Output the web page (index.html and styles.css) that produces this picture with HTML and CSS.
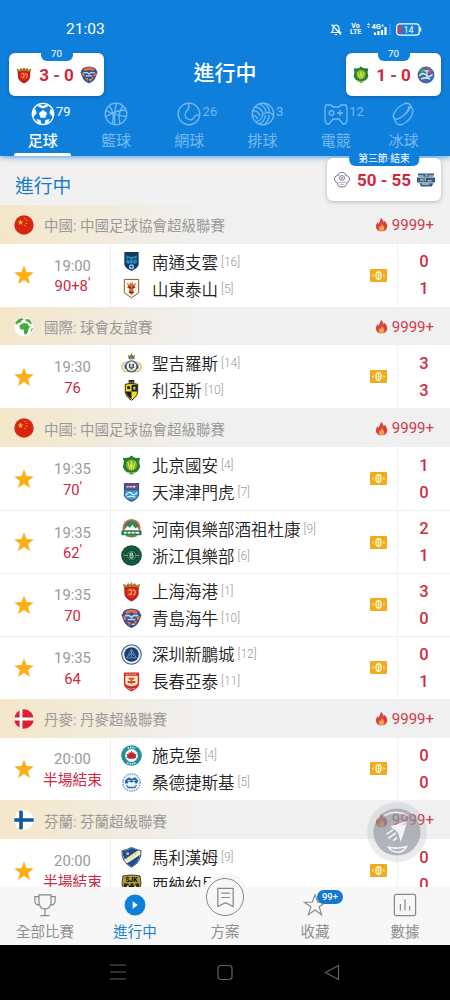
FILE: index.html
```
<!DOCTYPE html>
<html lang="zh-Hant">
<head>
    <meta charset="UTF-8">
    <meta name="viewport" content="width=device-width, initial-scale=1">
    <title>進行中</title>
    <link rel="stylesheet" href="styles.css">
</head>
<body>
    <!-- shared icons and club badges -->
    <svg class="sprite" aria-hidden="true">
        <symbol id="star" viewBox="0 0 24 24"><path fill="#fcb017" d="M12 1.5l2.8 7.3 7.9.4-6.2 4.9 2.1 7.6-6.6-4.3-6.6 4.3 2.1-7.6-6.2-4.9 7.9-.4z"/></symbol>
        <symbol id="flame" viewBox="0 0 14 16">
            <path fill="#d9423a" d="M6.2.8c2.4 1.6 3 3.6 3 5.1.6-.5.9-1.1 1-1.9C12 5.600 13.200 7.700 13.200 10c0 3.300-2.500 5.400-6 5.400S1 13.300 1 10.100c0-2 1-3.600 2-4.800.1 1 .4 1.700 1 2.200C4.200 5 6.600 3.500 6.200.8z"/>
            <path fill="#f5a14d" d="M7.300 7c.2 1.700 2.700 2.900 2.700 5.200 0 1.800-1.200 2.800-2.900 2.800s-3-1-3-2.800c0-1.100.5-1.900 1.100-2.500.2.700.5 1 .9 1.200.5-1.200.9-2.200 1.200-3.900z"/>
        </symbol>
        <symbol id="ticket" viewBox="0 0 17 13">
            <rect width="17" height="13" rx="1" fill="#f0ac1e"/>
            <ellipse cx="8.500" cy="6.500" rx="2.500" ry="3.700" fill="none" stroke="#fff3c8" stroke-width="1.500"/>
            <path d="M8.500 1.800v9.400M7.300 6.500h2.400" stroke="#fff3c8"/>
            <path d="M3.600 5L2 6.500 3.600 8zM13.400 5L15 6.500 13.400 8z" fill="#fff3c8"/>
        </symbol>
        <symbol id="cn" viewBox="0 0 20 20">
            <circle cx="10" cy="10" r="9.700" fill="#d9240f"/>
            <path fill="#fcc42c" d="M6.500 4.500l.8 2h2.100L7.700 7.800l.6 2.100-1.800-1.200-1.800 1.200.6-2.100-1.700-1.300h2.100z"/>
            <path fill="#fcc42c" d="M10.500 3h1v1h-1zM12.200 5h1v1h-1zM12 8h1v1h-1zM10.300 10h1v1h-1z"/>
        </symbol>
        <symbol id="world" viewBox="0 0 20 20">
            <circle cx="10" cy="10" r="9.500" fill="#fbfdfa"/>
            <path fill="#46a83f" d="M1.200 6.500C2.600 3.500 5 1.600 8 1l1.600 1.700-2.200.8-1 2.300-2.600.4-1 1.300zM6.500 7.500l3-1.600 4 .5 1.200 2.700 1.600.3-1.900 2.600-.5 3.200-2.200 2.500-1.600-.9-.3-4-3.300-.6-1.200-2.500zM11.500 2l4 .5 2.600 4-1.700.5-2.400-2.300-2.300-.4zM17.500 11.500l1.500-1-1.300 3.800-1 .3z"/>
        </symbol>
        <symbol id="dk" viewBox="0 0 20 20">
            <circle cx="10" cy="10" r="9.700" fill="#dc1f35"/>
            <path d="M7 .6v18.800M.3 10h19.400" stroke="#fff" stroke-width="2.800"/>
        </symbol>
        <symbol id="fi" viewBox="0 0 20 20">
            <circle cx="10" cy="10" r="9.700" fill="#fdfdfd"/>
            <path d="M7 .8v18.400M.3 10h19.400" stroke="#15569c" stroke-width="3.600"/>
        </symbol>

        <symbol id="nantong" viewBox="0 0 22 22">
            <path fill="#12395f" d="M3.500 1h15v12.500c0 3.200-3.500 5.200-7.500 7.500-4-2.300-7.500-4.300-7.500-7.500z"/>
            <path fill="#2583ba" d="M5 4.500l4 1.500h4l4-1.500-1 4.500 1 3-3 2-1.500-2-1.500 2-1.500-2L8 14l-3-2 1-3z"/>
            <path d="M7 8l3 1.500M15 8l-3 1.500" stroke="#0c2745" stroke-width="1.300"/>
            <circle cx="11" cy="16.500" r="2.700" fill="#8ed0ef"/><circle cx="11" cy="16.500" r="1.200" fill="#174a77"/>
        </symbol>
        <symbol id="shandong" viewBox="0 0 22 22">
            <path fill="#fff8ee" stroke="#74572f" d="M3.500 1.500h15v14L11 20.800 3.500 15.500z"/>
            <path fill="#e0683a" d="M6 5l3 2 1-3 1 2 1-2 1 3 3-2-1.500 4 1 1-3 1 1 4-2.500 3L8 15l1-4-3-1 1.500-1z"/>
            <path d="M8 9l2 2M14 9l-2 2M9 15h4" stroke="#37251c" stroke-width="1.400"/>
        </symbol>
        <symbol id="union" viewBox="0 0 22 22">
            <path fill="#777b48" d="M7.500 2L9.500 3 11 0l1.500 3 2-1L14 6.500H8z"/>
            <circle cx="6" cy="14.500" r="5" fill="#fffbea" stroke="#d6c14c" stroke-width="1.300"/>
            <circle cx="16" cy="14.500" r="5" fill="#fffbea" stroke="#d6c14c" stroke-width="1.300"/>
            <circle cx="11" cy="14" r="5.800" fill="none" stroke="#3d5ba6" stroke-width="1.400"/>
            <path d="M9 11.500V15q2 1.800 4 0v-3.500M4.500 12v4.500M17.500 12v4.500" fill="none" stroke="#28478f" stroke-width="1.500"/>
        </symbol>
        <symbol id="lierse" viewBox="0 0 22 22">
            <path fill="#222" d="M8 0h6v4H8z"/><path fill="#e4c628" d="M9 1.500h1v2H9zM12 1.500h1v2h-1z"/>
            <path fill="#f2dc25" stroke="#222" d="M4.500 4.500q6.500-2 13 0v8q-1 5.500-6.500 8.700-5.500-3.200-6.500-8.700z"/>
            <path fill="#1c1c1c" d="M5 12h6v8q-5-3-6-8zM11 5h6v7h-6z"/>
            <path fill="#1c1c1c" d="M6.500 6.500h3v3h-3z"/><path fill="#f2dc25" d="M13 7h2v3h-2z"/>
        </symbol>
        <symbol id="beijing" viewBox="0 0 22 22">
            <path fill="#267b34" d="M11 .5l3 2.300 6 .4-1 4 1 6-3 4-6 3.500L5 17.200l-3-4 1-6-1-4 6-.4z"/>
            <circle cx="11" cy="10.500" r="5.800" fill="#7cb52f"/>
            <path d="M7 7l2.200 7L11 8l1.800 6L15 7M11 6v10" fill="none" stroke="#e0e345" stroke-width="1.100"/>
            <path d="M6 18q5 2 10 0" fill="none" stroke="#b4d24a"/>
        </symbol>
        <symbol id="tianjin" viewBox="0 0 22 22">
            <path fill="#3c568e" d="M3 1h16v13q-1 4-8 7-7-3-8-7z"/>
            <path fill="#8c4c70" d="M5 3h12v4H5z"/><path d="M6 5h2m1 0h2m1 0h3" stroke="#dfe4ef" stroke-width="1.500"/>
            <path fill="#3b9cd1" d="M4 9h14v5q-1 3-7 5.500-6-2.500-7-5.500z"/>
            <path d="M5 14q3-5 6-2 2 3 6-1M6 16q5-2 9 0" fill="none" stroke="#dff2fb" stroke-width="1.300"/>
        </symbol>
        <symbol id="tigers" viewBox="0 0 22 22">
            <circle cx="11" cy="11" r="10.300" fill="#46689f"/>
            <path fill="#4d9c6b" d="M3 6l4-4 3 3-3 4z"/><path fill="#c8518b" d="M13 2l5 3-2 4-4-2z"/>
            <path d="M3 12q4-5 8-1t8-1M5 16q6-3 11 0" fill="none" stroke="#cfe8f7" stroke-width="2"/>
            <path d="M9 6h5M12 6v7" stroke="#e9eef7" stroke-width="1.500"/>
        </symbol>
        <symbol id="henan" viewBox="0 0 22 22">
            <circle cx="11" cy="10.500" r="9.500" fill="#d3645a"/><path fill="#2b8b4b" d="M4 8a7.300 7.300 0 0 1 14 0v5H4z"/>
            <path fill="#fff" d="M3 13l4-5 2 2.500L12 7l3 4 2-1.500 2 3.500z"/>
            <path fill="#1f7d45" d="M.5 13h21v5H.5z"/><path d="M3 15.500h3m1 0h3m1 0h3m1 0h4" stroke="#e6f6e8" stroke-width="2"/>
            <path d="M5 18.500q6 3 12 0" fill="none" stroke="#2b8b4b"/>
        </symbol>
        <symbol id="zhejiang" viewBox="0 0 22 22">
            <circle cx="11" cy="11" r="10.800" fill="#0e4f35"/><circle cx="11" cy="11" r="8.200" fill="none" stroke="#286a50"/>
            <circle cx="11" cy="11" r="4.500" fill="none" stroke="#5c9a7c" stroke-width=".8"/>
            <path d="M3 11h4m8 0h4" stroke="#b59b52"/><path d="M9.500 8.500v5m0-5h2.500v2H9.500m3 0v3h-3" fill="none" stroke="#cbeeda"/>
        </symbol>
        <symbol id="shanghai" viewBox="0 0 22 22">
            <path fill="#ae7c27" d="M2 3l3.500 1.500L7.500 2 9.500 4 11 .8 12.500 4l2-2 2 2.500L20 3l-1.500 6h-15z"/>
            <path fill="#b92020" d="M3.500 7q7.500-2 15 0v6.500q-1 5-7.500 8-6.500-3-7.500-8z"/>
            <circle cx="11" cy="12" r="5.500" fill="#e22b1d"/>
            <path d="M8 10q2-2 3 .2v3q-1.500 2-3 0M12 10q3-1.500 3 1.500t-2 3" fill="none" stroke="#f6b35e" stroke-width="1.200"/>
        </symbol>
        <symbol id="qingdao" viewBox="0 0 22 22">
            <path fill="#34508c" d="M2 5q1-4 9-4.500Q19 1 20 5l1.500 3-2.500 6q-2 5-8 7-6-2-8-7L.5 8z"/>
            <path fill="#ef6b42" d="M4 4q7-5 14 0l-2 2.500-5-2-5 2z"/>
            <path fill="#ef6b42" d="M1 8l5 2-1 3-2-1zM21 8l-5 2 1 3 2-1zM6 14l4 1-1 4zM14 13l3 1-3 4z"/>
            <path d="M4 8h5l2 2 2-2h5M7 12h8M11 17h3" stroke="#b6daf0" stroke-width="1.600" fill="none"/>
        </symbol>
        <symbol id="shenzhen" viewBox="0 0 22 22">
            <circle cx="11" cy="11" r="10.200" fill="#e8f0f6" stroke="#315b87" stroke-width="1.100"/><circle cx="11" cy="11" r="7.600" fill="#1c3e6e"/>
            <path d="M11 5.500l-5 9h10zM8 13l3-4 3 4M11 6v8" fill="none" stroke="#5d94c4"/>
        </symbol>
        <symbol id="changchun" viewBox="0 0 22 22">
            <path fill="#d32a2b" d="M3 1.500h16V14q-1 4.500-8 7.500-7-3-8-7.500z"/>
            <path fill="#f7e9bd" d="M4.500 5h13v8.500q-2 2-6.500 2.500-4.500-.5-6.500-2.500z"/>
            <path fill="#d34932" d="M8 7h6v2H8zM7 10.500h8v2H7zM10.200 7h1.600v7h-1.600z"/>
            <path d="M5 3.300h12M7 18q4 2 8 0" fill="none" stroke="#f4ccb9" stroke-dasharray="2 1"/>
        </symbol>
        <symbol id="silkeborg" viewBox="0 0 22 22">
            <circle cx="11" cy="11" r="10.800" fill="#218f99"/><circle cx="11" cy="11" r="6.700" fill="#eefafa"/>
            <path d="M7 3.500q4-2 8 0M6.500 18.500q4.500 2.500 9 0" fill="none" stroke="#c5ecea" stroke-width="1.800" stroke-dasharray="1.500 1"/>
            <path fill="#c02830" d="M11 6l1.300 2.500 1.700-1v2.300l2.300-.3-1 2.500 1 1-3 1.500h-4.600L5.700 13l1-1-1-2.500 2.300.3V7.500l1.700 1z"/>
        </symbol>
        <symbol id="sonderjyske" viewBox="0 0 22 22">
            <circle cx="11" cy="11" r="10" fill="#f0f6fb"/><circle cx="11" cy="11" r="9" fill="none" stroke="#7b9fca" stroke-width="1.600" stroke-dasharray="1.500 1"/>
            <path fill="#3167a4" d="M4.500 8l4-2.500L11 7l4-1.500L18 9l-1 3h-2l-1-2-3 1-3-1-1 2H4zM5 13q6 4 12 0l-2 4H7z"/>
            <path d="M7 9h3m2 0h3M7 15h8" stroke="#d7eaf6"/>
        </symbol>
        <symbol id="mariehamn" viewBox="0 0 22 22">
            <path fill="#f8f6dc" stroke="#224b8c" d="M1 4q5-1 10-3.500Q16 3 21 4q.5 12-10 17.200Q.5 16 1 4z"/>
            <path fill="#204c91" d="M1.500 4.300Q7 3.500 11 1l7 2.500L3.800 13Q1.500 9 1.500 4.300zM6 17.200L20 8q-1 8-9 12.800z"/>
            <path d="M6 14l12-8" stroke="#e6d15b" stroke-width="2.500" stroke-dasharray="2 1.300"/><circle cx="7" cy="7" r="1.500" fill="#d7c94f"/>
        </symbol>
        <symbol id="sjk" viewBox="0 0 22 22">
            <path fill="#ad9d42" stroke="#46401e" d="M2 2q9-2 18 0l1 8-2 8-8 4-8-4-2-8z"/>
            <path fill="#252416" d="M3 10h5v2h2v-2h3v2h2v-2h4v3l-3 2 1 3-3-1-3 3-3-3-3 1 1-3-3-2z"/>
            <text x="11" y="8.800" class="crest-text">SJK</text>
            <path fill="#e8d76c" d="M6 12h2v2H6zM14 12h2v2h-2zM10 15h2v2h-2z"/>
        </symbol>
        <symbol id="taipei" viewBox="0 0 22 22">
            <path d="M11 2q4-1 4.500 3.500Q21 6 20 11q-1 3-3 3-.5 6-6 5.500-5.500.5-6-5.500-2 0-3-3Q1 6 6.500 5.500 7 1 11 2z" fill="#fff" stroke="#756b9c" stroke-width="1.200"/>
            <circle cx="11" cy="8.500" r="3" fill="none" stroke="#6a5788"/><circle cx="11" cy="8.500" r="1" fill="#3e3e73"/>
            <path d="M6 14h10M8 16.500h6" stroke="#cb9da9"/>
        </symbol>
        <symbol id="kings" viewBox="0 0 22 22">
            <path fill="#315a7b" d="M1 3h20l-1 4H2zM0 8h22v6H0zM3 15h17l-2 4H5z"/>
            <path d="M2 6h6m2-1h3m2 1h5M4 10h4m2 2V9m3 3h5M6 16h9" stroke="#d9edf5" stroke-width="1.200"/>
            <path fill="#72a9bf" d="M2 12l5-2 2 3zM14 4l5 2-4 2z"/>
        </symbol>
    </svg>

    <div class="phone">
        <header class="header">
            <div class="status">
                <span class="clock">21:03</span>
                <div class="status-icons">
                    <svg width="12" height="13" viewBox="0 0 12 13" fill="none" stroke="#fff" stroke-width="1.200"><path d="M1.500 9.500h9L9 7.500V5Q8.500 2 6 2 3.500 2 3 5v2.500zM5 11.500h2M1.500 1.500l9.500 10"/></svg>
                    <span class="volte">Vo<br>LTE</span>
                    <svg class="signal" width="25" height="14" viewBox="0 0 25 14">
                        <path d="M1 3l1.500-2L4 3zM1 4.500L2.500 6 4 4.500z" fill="#fff"/>
                        <text x="5.500" y="6.500" class="net">4G⁺</text>
                        <path d="M9 13v-2.500M12.500 13V9M16 13V8M19.500 13V5" stroke="#fff" stroke-width="2.200"/>
                        <path d="M24 2v11" stroke="#5ba9eb"/>
                    </svg>
                    <svg class="battery" width="26" height="13" viewBox="0 0 26 13">
                        <rect x=".7" y=".8" width="22.500" height="11.400" rx="3" fill="none" stroke="#fff" stroke-width="1.200"/>
                        <path d="M2.500 2.500h3v8h-3z" fill="#e5374d"/><path d="M24.500 4.500v4" stroke="#fff" stroke-width="1.500"/>
                        <text x="12.500" y="9.700" class="level">14</text>
                    </svg>
                </div>
            </div>
            <h1 class="title">進行中</h1>
            <nav class="sports">
                <a class="sport active">
                    <svg viewBox="0 0 24 24"><circle cx="12" cy="12" r="10.700"/><path class="solid" d="M12 8l4 3-1.500 4.700h-5L8 11zM8 2.200L12 4l4-1.800 1 2.300L12 6.500 7 4.500zM1.500 9L4.800 7l.7 4.500-3.300 3.500zM22.500 9l-3.300-2-.7 4.500 3.300 3.500zM5.500 17l4 1 .8 4-3.500-1.500zM18.500 17l-4 1-.8 4 3.500-1.500z"/></svg>
                    <sup>79</sup><span>足球</span>
                </a>
                <a class="sport">
                    <svg viewBox="0 0 24 24"><circle cx="12" cy="12" r="10.800"/><path d="M2 8.500q9 5 20.500 6M12.500 1.200q-3 10-1.500 21.600M5 4q6 6 3.500 18M19 4q-6 7-3 18M22 8q-10 0-20.500 7"/></svg>
                    <span>籃球</span>
                </a>
                <a class="sport">
                    <svg viewBox="0 0 24 24"><circle cx="12" cy="12" r="10.800"/><path d="M11 1.500q2.500 3.500-1 7-4 4.500 0 8 5 3 7-1 1.500-3 5.500-2.500"/></svg>
                    <sup>26</sup><span>網球</span>
                </a>
                <a class="sport">
                    <svg viewBox="0 0 24 24"><circle cx="12" cy="12" r="10.800"/><path d="M12 12q-1-6-8-7M12 12q6-3 10.500 1M12 12q-1 6-7 8M8 2q6 2 7 8M13 1.500q5 3 5.500 9M2 9q5-1 7 5M1.500 14q4-1 5 3M14.500 13q-.5 6-6 9M18 13q0 5-4 9"/></svg>
                    <sup>3</sup><span>排球</span>
                </a>
                <a class="sport esport">
                    <svg viewBox="0 0 24 24"><path d="M2 3h5l2 2h6l2-2h5l1 3v13l-2 3h-2l-4-5H9l-4 5H3l-2-3V6z"/><circle cx="7.500" cy="11" r="2.300"/><path d="M13 11h6M16 8v6"/></svg>
                    <sup>12</sup><span>電競</span>
                </a>
                <a class="sport">
                    <svg viewBox="0 0 24 24"><path d="M2 14Q5 5 14 1.500q4-1 6 2.500l2 4.500Q21 18 11 22.500q-4 1-6-2zM2 14q1 4 5 3 9-4 13-13M7 17q10-5 11-13"/></svg>
                    <span>冰球</span>
                </a>
            </nav>
            <div class="float-score left">
                <em>70</em><svg><use href="#shanghai"/></svg><b>3 - 0</b><svg><use href="#qingdao"/></svg>
            </div>
            <div class="float-score right">
                <em>70</em><svg><use href="#beijing"/></svg><b>1 - 0</b><svg><use href="#tigers"/></svg>
            </div>
            <div class="float-score basket">
                <em>第三節·結束</em><svg><use href="#taipei"/></svg><b>50 - 55</b><svg><use href="#kings"/></svg>
            </div>
        </header>

        <main class="content">
            <h2 class="section-title">進行中</h2>
            <div id="list"></div>
        </main>

        <nav class="tabbar">
            <a class="tab">
                <svg viewBox="0 0 26 26"><path d="M6.500 2h13v8q-.5 7-6.500 7.500Q7 17 6.500 10zM6.500 4H2v5q.5 4 6 4M19.500 4H24v5q-.5 4-6 4M13 17.500V24M8 24.500h10"/></svg>
                <span>全部比賽</span>
            </a>
            <a class="tab active">
                <svg viewBox="0 0 26 26"><circle cx="13" cy="13" r="11.300" class="disc"/><path class="play" d="M10.500 9l5.500 4-5.500 4z"/></svg>
                <span>進行中</span>
            </a>
            <a class="tab plan">
                <i class="plan-icon"><svg viewBox="0 0 24 24"><path d="M4 2.500h16v19l-8-4-8 4zM7.500 7.500h9M7.500 12h9"/></svg></i>
                <span>方案</span>
            </a>
            <a class="tab">
                <svg viewBox="0 0 26 26"><path d="M13 2l3 8h8.500l-7 5 2.700 8.500L13 18.500l-7.200 5L8.500 15l-7-5H10z"/></svg>
                <em class="badge">99+</em>
                <span>收藏</span>
            </a>
            <a class="tab">
                <svg viewBox="0 0 26 26"><rect x="1.500" y="1.500" width="23" height="23" rx="2"/><path d="M8 12v7M13 7v12M18 14v5"/></svg>
                <span>數據</span>
            </a>
        </nav>

        <div class="float-ball">
            <svg viewBox="0 0 50 50">
                <circle cx="25" cy="25" r="24.500" fill="#8d919b"/>
                <path d="M12 8q12-7 24 0M16 41q9 2 19-1-3 6-9 6t-10-5z" fill="none" stroke="#fff" stroke-width="1.600"/>
                <path d="M18 19l18-5.500-7 22-3-10z" fill="#fff"/>
                <path d="M14 27.500l7-5M16 31.500l8-5.500M21 34l4-3" stroke="#fff" stroke-width="1.800"/>
            </svg>
        </div>

        <footer class="system">
            <svg viewBox="0 0 20 20"><path d="M2 3h16M2 10h16M2 17h16"/></svg>
            <svg viewBox="0 0 20 20"><rect x="3" y="3.500" width="14" height="14" rx="3"/></svg>
            <svg viewBox="0 0 20 20"><path d="M16.500 3.500v14L3.500 10.500z"/></svg>
        </footer>
    </div>

    <script>
        var CSL = '中國: 中國足球協會超級聯賽';
        // match: [start, minute, home, home rank, home badge, away, away rank, away badge, home goals, away goals]
        var leagues = [
            { flag: 'cn', name: CSL, matches: [
                ['19:00', "90+8'", '南通支雲', 16, 'nantong', '山東泰山', 5, 'shandong', 0, 1]
            ]},
            { flag: 'world', name: '國際: 球會友誼賽', matches: [
                ['19:30', '76', '聖吉羅斯', 14, 'union', '利亞斯', 10, 'lierse', 3, 3]
            ]},
            { flag: 'cn', name: CSL, matches: [
                ['19:35', "70'", '北京國安', 4, 'beijing', '天津津門虎', 7, 'tianjin', 1, 0],
                ['19:35', "62'", '河南俱樂部酒祖杜康', 9, 'henan', '浙江俱樂部', 6, 'zhejiang', 2, 1],
                ['19:35', '70', '上海海港', 1, 'shanghai', '青島海牛', 10, 'qingdao', 3, 0],
                ['19:35', '64', '深圳新鵬城', 12, 'shenzhen', '長春亞泰', 11, 'changchun', 0, 1]
            ]},
            { flag: 'dk', name: '丹麥: 丹麥超級聯賽', matches: [
                ['20:00', '半場結束', '施克堡', 4, 'silkeborg', '桑德捷斯基', 5, 'sonderjyske', 0, 0]
            ]},
            { flag: 'fi', name: '芬蘭: 芬蘭超級聯賽', matches: [
                ['20:00', '半場結束', '馬利漢姆', 9, 'mariehamn', '西納約尼', '', 'sjk', 0, 0]
            ]}
        ];

        function icon(id, cls) {
            return '<svg class="' + cls + '"><use href="#' + id + '"/></svg>';
        }

        function team(name, rank, badge) {
            return '<div class="team">' + icon(badge, 'crest') + '<span>' + name + '</span>' +
                (rank ? '<small>[' + rank + ']</small>' : '') + '</div>';
        }

        var html = '';
        leagues.forEach(function(league) {
            html += '<div class="league">' + icon(league.flag, 'flag') + '<span>' + league.name + '</span>' +
                icon('flame', 'flame') + '<b>9999+</b></div>';
            league.matches.forEach(function(m) {
                var minute = m[1].replace("'", "<sup>'</sup>");
                html += '<div class="match">' + icon('star', 'star') +
                    '<div class="time"><span>' + m[0] + '</span><span class="minute">' + minute + '</span></div>' +
                    '<div class="teams">' + team(m[2], m[3], m[4]) + team(m[5], m[6], m[7]) + '</div>' +
                    icon('ticket', 'ticket') +
                    '<div class="score"><b>' + m[8] + '</b><b>' + m[9] + '</b></div></div>';
            });
        });
        document.getElementById('list').innerHTML = html;
    </script>
</body>
</html>
```
FILE: styles.css
```
* {
    box-sizing: border-box;
}

body {
    margin: 0;
    font-family: Roboto, "Noto Sans CJK TC", sans-serif;
    color: #222;
}

h1, h2 {
    margin: 0;
    font-weight: 500;
}

em, i {
    font-style: normal;
}

.sprite {
    position: absolute;
    width: 0;
    height: 0;
}

.phone {
    position: relative;
    display: flex;
    flex-direction: column;
    width: 450px;
    height: 1000px;
    overflow: hidden;
    background: #fff;
}

/* header */
.header {
    position: relative;
    z-index: 2;
    height: 156px;
    flex: none;
    background: #0f7fdc;
    color: #fff;
    box-shadow: 0 1px 6px rgba(15, 127, 220, .75);
}

.status {
    display: flex;
    justify-content: space-between;
    align-items: center;
    height: 56px;
    padding: 2px 28px 0 66px;
}

.clock {
    font-size: 15.500px;
}

.status-icons {
    display: flex;
    align-items: center;
}

.volte {
    width: 11px;
    margin: 0 5px 0 8px;
    font-size: 7px;
    font-weight: 700;
    line-height: 6.500px;
    text-align: center;
}

.battery {
    margin-left: 5px;
}

.net {
    font-size: 7.500px;
    font-weight: 700;
    fill: #fff;
}

.level {
    font-size: 9px;
    fill: #fff;
    text-anchor: middle;
}

.title {
    height: 44px;
    line-height: 34px;
    font-size: 21px;
    text-align: center;
}

.sports {
    display: grid;
    grid-template-columns: repeat(5, 73.300px) 62px;
    padding-left: 6px;
}

.sport {
    position: relative;
    display: flex;
    flex-direction: column;
    align-items: center;
    height: 56px;
    padding-top: 2px;
    font-size: 15px;
    line-height: 20px;
    color: #76bbf3;
}

.sport svg {
    width: 24px;
    height: 24px;
    margin-bottom: 5px;
    fill: none;
    stroke: currentColor;
    stroke-width: 1.300;
}

.sport sup {
    position: absolute;
    left: 50px;
    top: 2px;
    font-size: 13px;
    line-height: 20px;
}

.sport.active {
    color: #fff;
    font-weight: 500;
}

.sport.active sup {
    font-weight: 400;
}

.sport .solid {
    fill: #fff;
    stroke: none;
}

.sport.active::after {
    content: "";
    width: 57px;
    height: 3px;
    margin-top: 2px;
    border-radius: 2px 2px 0 0;
    background: #fff;
}

/* floating scores */
.float-score {
    position: absolute;
    top: 53px;
    display: flex;
    justify-content: space-between;
    align-items: center;
    width: 95px;
    height: 43px;
    padding: 0 6px;
    border-radius: 6px;
    background: #fff;
    color: #cf2740;
    font-size: 17px;
    box-shadow: 0 1px 4px rgba(0, 0, 0, .25);
}

.float-score.left {
    left: 9px;
}

.float-score.right {
    right: 9px;
}

.float-score.basket {
    top: 158px;
    right: 9px;
    width: 114px;
}

.float-score svg {
    width: 18px;
    height: 18px;
}

.float-score em {
    position: absolute;
    left: 50%;
    top: -7px;
    min-width: 32px;
    height: 15px;
    padding: 0 9px;
    transform: translateX(-50%);
    border-radius: 0 0 6px 6px;
    background: #0f7fdc;
    color: #fff;
    font-size: 9.800px;
    line-height: 15px;
    text-align: center;
    white-space: nowrap;
}

/* list */
.content {
    flex: 1;
    min-height: 0;
    overflow: hidden;
}

.section-title {
    height: 49px;
    padding: 4px 15px 0;
    background: #f1f1f1;
    color: #1879c8;
    font-size: 18.800px;
    line-height: 54px;
    font-weight: 400;
}

.league {
    display: flex;
    align-items: center;
    height: 38.800px;
    padding: 1px 16px 0 14px;
    background: linear-gradient(90deg, #f4e6c8, #f0f0f0 45%);
    color: #999;
    font-size: 14.500px;
}

.league span {
    flex: 1;
}

.league b {
    color: #cb3b4c;
    font-size: 15px;
    font-weight: 400;
}

.flag {
    width: 20px;
    height: 20px;
    margin-right: 10px;
}

.flame {
    width: 13px;
    height: 15px;
    margin-right: 4px;
}

.match {
    display: grid;
    grid-template-columns: 34px 76px 1fr 27px 53px;
    align-items: center;
    height: 62.900px;
    background: #fff;
}

.match + .match {
    border-top: 1px solid #efefef;
}

.star {
    width: 22px;
    height: 22px;
    margin-left: 13px;
}

.time {
    display: flex;
    flex-direction: column;
    align-items: center;
    margin-right: -1px;
    padding-top: 2px;
    color: #999;
    font-size: 14.800px;
    line-height: 20.500px;
}

.time .minute {
    color: #cf2740;
    white-space: nowrap;
}

.minute sup {
    font-size: 14px;
    line-height: 0;
    vertical-align: 3px;
}

.teams {
    display: flex;
    flex-direction: column;
    justify-content: center;
    height: 100%;
    padding-left: 10px;
    border-left: 1px solid #efefef;
}

.team {
    display: flex;
    align-items: center;
    height: 27px;
    font-size: 16.500px;
    font-weight: 350;
    white-space: nowrap;
}

.crest {
    width: 21px;
    height: 21px;
    margin-right: 10px;
}

.crest-text {
    font-size: 7px;
    font-weight: 700;
    text-anchor: middle;
}

.team small {
    margin-left: 3px;
    color: #999;
    font-size: 12px;
}

.ticket {
    width: 17px;
    height: 13px;
}

.score {
    display: flex;
    flex-direction: column;
    justify-content: center;
    align-items: center;
    height: 100%;
    border-left: 1px solid #f3f3f3;
    color: #c92f44;
    font-size: 16.500px;
    line-height: 27px;
}

.score b {
    font-weight: 500;
}

/* bottom navigation */
.tabbar {
    position: relative;
    display: flex;
    flex: none;
    height: 58px;
    background: #f7f7f7;
}

.tab {
    position: relative;
    flex: 1;
    display: flex;
    flex-direction: column;
    align-items: center;
    padding-top: 6px;
    color: #8f8f8f;
    font-size: 14.500px;
    line-height: 22px;
}

.tab svg {
    width: 24px;
    height: 24px;
    margin-bottom: 5px;
    fill: none;
    stroke: #888;
    stroke-width: 1.300;
}

.tab.active {
    color: #1680d3;
}

.tab .disc {
    fill: #0f7fdc;
    stroke: none;
}

.tab .play {
    fill: #fff;
    stroke: none;
}

.plan {
    padding-top: 35px;
}

.plan-icon {
    position: absolute;
    top: -14px;
    left: 50%;
    display: flex;
    justify-content: center;
    align-items: center;
    width: 48px;
    height: 48px;
    margin-left: -24px;
    border-radius: 50%;
    background: #f7f7f7;
}

.plan-icon::before {
    content: "";
    position: absolute;
    width: 36px;
    height: 36px;
    border: 1px solid #888;
    border-radius: 50%;
}

.plan-icon svg {
    width: 23px;
    height: 23px;
    margin: 0;
}

.badge {
    position: absolute;
    left: 47px;
    top: 3px;
    width: 26px;
    height: 14px;
    border-radius: 7px;
    background: #1479cd;
    color: #fff;
    font-size: 9.500px;
    font-weight: 500;
    line-height: 14px;
    text-align: center;
}

.float-ball {
    position: absolute;
    left: 367px;
    top: 802px;
    width: 60px;
    height: 60px;
    padding: 6px;
    border-radius: 50%;
    background: rgba(150, 155, 165, .2);
}

.float-ball svg {
    display: block;
    width: 48px;
    height: 48px;
    opacity: .6;
}

.system {
    display: flex;
    flex: none;
    justify-content: center;
    gap: 87px;
    height: 55px;
    padding-top: 17px;
    background: #000;
}

.system svg {
    width: 20px;
    height: 20px;
    fill: none;
    stroke: #626262;
    stroke-width: 1.200;
}
```
